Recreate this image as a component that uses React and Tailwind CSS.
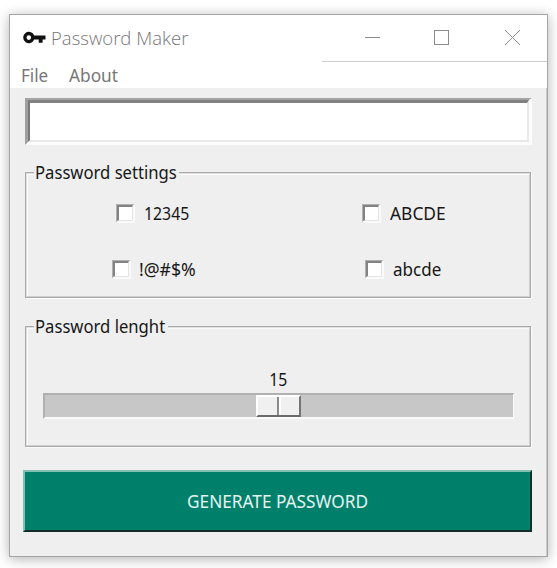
import React from "react";

function Check({ label, className, textClass }) {
  return (
    <label className={"flex h-5 items-center " + className}>
      <span className="block size-[19px] shrink-0 border-r-2 border-b-2 border-t border-l border-t-[#b0b0b0] border-l-[#b0b0b0] border-r-[#fafafa] border-b-[#fafafa]">
        <span className="block size-full border-t-2 border-l-2 border-r border-b border-t-[#838383] border-l-[#838383] border-r-[#e4e4e4] border-b-[#e4e4e4] bg-white" />
      </span>
      <span className={"origin-left whitespace-nowrap " + textClass}>{label}</span>
    </label>
  );
}

function Group({ title, titleWidth, textClass, className, children }) {
  return (
    <section className={"relative border border-[#a9a9a9] shadow-[1px_1px_0_#fbfbfb,inset_1px_1px_0_#e0e0e0,inset_-1px_-1px_0_#cfcfcf,inset_2px_2px_0_#fbfbfb] " + className}>
      <h2 className={"absolute -top-[13px] left-[8px] h-6 bg-[#efefef] pl-px leading-6 " + titleWidth}>
        <span className={"block origin-left whitespace-nowrap " + textClass}>{title}</span>
      </h2>
      {children}
    </section>
  );
}

export default function App() {
  return (
    <div className="h-[568px] w-[557px] overflow-hidden bg-white pt-[14px] pl-[9px] font-['Noto_Sans','Open_Sans',sans-serif] text-[18px] leading-5 text-[#171717]">
      <main className="flex h-[543px] w-[539px] flex-col border border-[#a5a5a5] bg-[#efefef] shadow-[0_2px_12px_rgba(0,0,0,0.3)]">
        <header className="flex h-[47px] shrink-0 bg-white">
          <div className="flex w-[312px] pt-[14px] pl-3">
            <svg className="mt-px h-4 w-6 shrink-0" viewBox="0 0 24 16">
              <path d="M12.2 5.500A5.7 5.7 0 1 0 12.2 9.600H16.700v3.200h3.900V9.600H23.500V5.500ZM6.800 9.900a2.300 2.300 0 1 1 0-4.600 2.300 2.300 0 0 1 0 4.600Z" fill="#111" />
            </svg>
            <h1 className="ml-[5px] origin-left scale-x-[0.975] whitespace-nowrap font-['Open_Sans','Noto_Sans',sans-serif] text-[19px] font-light leading-[18px] text-[#777]">Password Maker</h1>
          </div>
          <div className="flex flex-1 border-b border-[#cecece]">
            <svg className="h-[46px] w-full" viewBox="0 0 225 46" fill="none" stroke="#8c8c8c" shapeRendering="crispEdges">
              <path d="M43 22.5h15M112.500 15.500h14v14h-14z" />
              <path d="m183 15 15 15m0-15-15 15" shapeRendering="auto" />
            </svg>
          </div>
        </header>
        <nav className="flex h-[26px] shrink-0 bg-white pt-[3px] pl-[11px] text-[#777]">
          <span className="w-12 origin-left scale-x-[0.945]">File</span>
          <span className="origin-left scale-x-[0.96]">About</span>
        </nav>
        <div className="flex flex-1 flex-col border-r border-[#c8c8c8] pt-[10px] pl-[15px]">
          <div className="h-[47px] w-[507px] border-t-2 border-l-[3px] border-r-[3px] border-b-[3px] border-t-[#a4a4a4] border-l-[#a0a0a0] border-r-[#fcfcfc] border-b-[#fcfcfc]">
            <input className="block size-full border-t-[3px] border-l-2 border-r-2 border-b-2 border-t-[#818181] border-l-[#797979] border-r-[#e8e8e8] border-b-[#e8e8e8] bg-white outline-none" aria-label="Password" />
          </div>
          <Group title="Password settings" titleWidth="w-[145px]" textClass="scale-x-[0.925]" className="mt-[27px] h-[126px] w-[506px]">
            <div className="grid h-full grid-cols-[246px_1fr] grid-rows-[56px_1fr] pt-[30px] pl-[90px]">
              <Check label="12345" className="" textClass="ml-[9px] scale-x-[0.88]" />
              <Check label="ABCDE" className="" textClass="ml-[9px] scale-x-[0.965]" />
              <Check label="!@#$%" className="-ml-1" textClass="ml-[8px] scale-x-[0.98]" />
              <Check label="abcde" className="ml-[3px]" textClass="ml-[9px] scale-x-[0.945]" />
            </div>
          </Group>
          <Group title="Password lenght" titleWidth="w-[134px]" textClass="scale-x-[0.925]" className="mt-[28px] h-[121px] w-[506px]">
            <div className="flex flex-col pt-[42px] pl-[17px]">
              <div className="w-[471px] text-center"><span className="inline-block scale-x-[0.88]">15</span></div>
              <div className="mt-[4px] h-[26px] w-[471px] border-t-2 border-l-2 border-r border-b-2 border-t-[#b0b0b0] border-l-[#b0b0b0] border-r-[#fafafa] border-b-[#fafafa] bg-[#c7c7c7] pl-[211px]">
                <div className="grid h-[22px] w-[45px] grid-cols-2 border-2 border-t-white border-l-white border-r-[#747474] border-b-[#6b6b6b] bg-[#f0f0f0]">
                  <span className="border-r-2 border-r-[#8a8a8a]" />
                  <span className="border-l-2 border-l-white" />
                </div>
              </div>
            </div>
          </Group>
          <button className="mt-[23px] -ml-[2px] h-[62px] w-[509px] border-2 border-t-[#83c1b5] border-l-[#83c1b5] border-r-[#102d27] border-b-[#102d27] bg-[#00806a] text-white/90">
            <span className="inline-block scale-x-[0.957] whitespace-nowrap">GENERATE PASSWORD</span>
          </button>
        </div>
      </main>
    </div>
  );
}
